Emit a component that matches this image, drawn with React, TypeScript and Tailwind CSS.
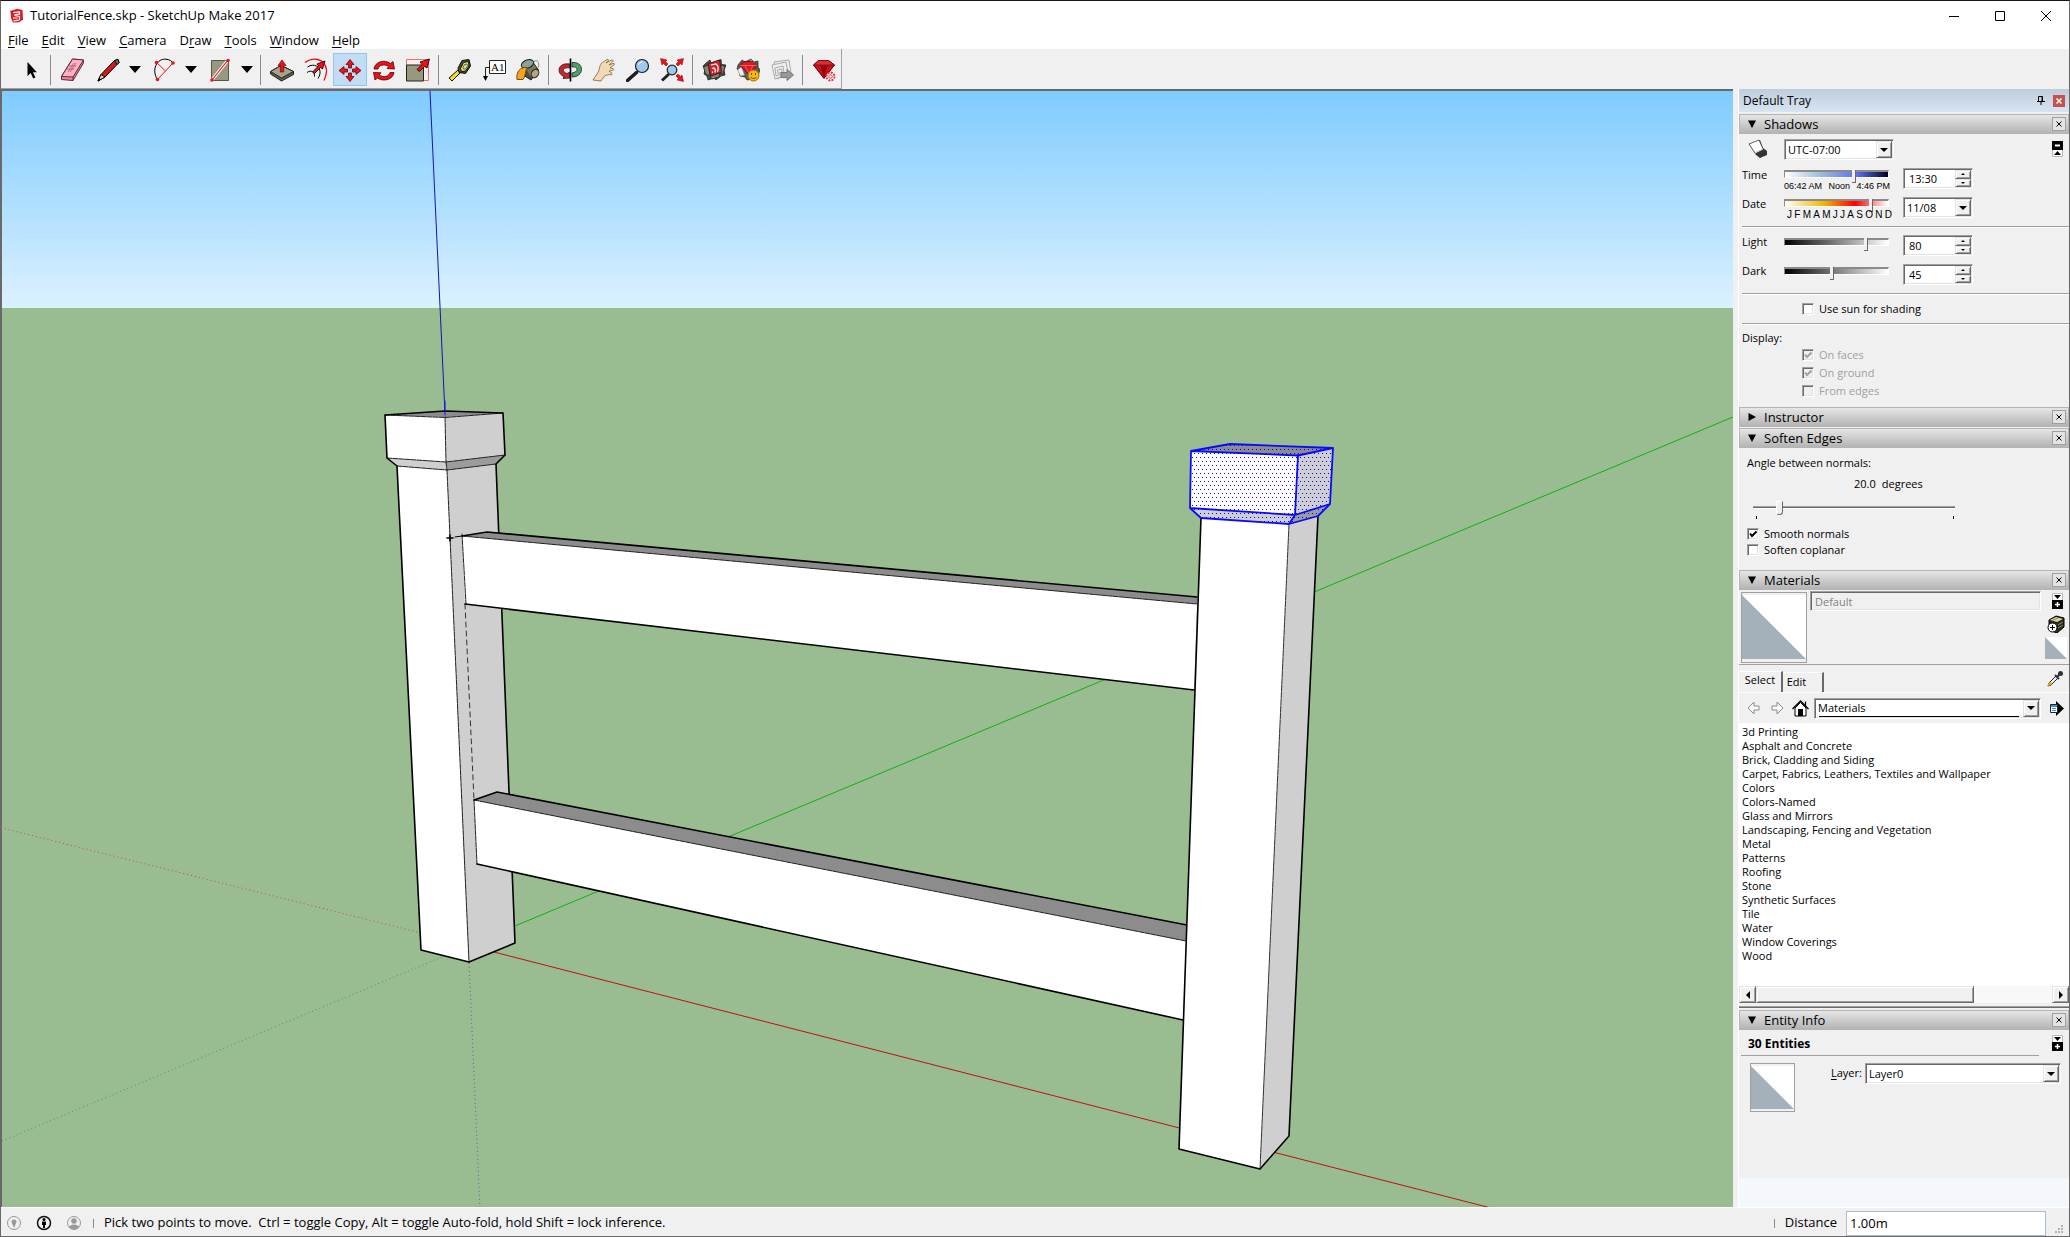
import { useState } from "react";
import type { ReactNode } from "react";
import clsx from "clsx";

const MENUS = [
  ["", "F", "ile"],
  ["", "E", "dit"],
  ["", "V", "iew"],
  ["", "C", "amera"],
  ["D", "r", "aw"],
  ["", "T", "ools"],
  ["", "W", "indow"],
  ["", "H", "elp"],
];

const MATERIALS = [
  "3d Printing",
  "Asphalt and Concrete",
  "Brick, Cladding and Siding",
  "Carpet, Fabrics, Leathers, Textiles and Wallpaper",
  "Colors",
  "Colors-Named",
  "Glass and Mirrors",
  "Landscaping, Fencing and Vegetation",
  "Metal",
  "Patterns",
  "Roofing",
  "Stone",
  "Synthetic Surfaces",
  "Tile",
  "Water",
  "Window Coverings",
  "Wood",
];

const SUNKEN =
  "border border-t-[#a0a0a0] border-l-[#a0a0a0] border-r-white border-b-white shadow-[inset_1px_1px_0_#696969,inset_-1px_-1px_0_#e3e3e3]";
const RAISED =
  "bg-[#f0f0f0] border border-t-[#e3e3e3] border-l-[#e3e3e3] border-r-[#696969] border-b-[#696969] shadow-[inset_1px_1px_0_#ffffff,inset_-1px_-1px_0_#a0a0a0]";

export default function App() {
  return (
    <div className="flex h-screen min-h-[900px] flex-col overflow-hidden border border-[#696969] border-t-[#1c1618] bg-[#f0f0f0] font-['Open_Sans',sans-serif] text-[13px] text-black">
      <TitleBar />
      <MenuBar />
      <Toolbar />
      <main className="flex min-h-0 flex-1">
        <div className="min-w-0 flex-1 border-t-2 border-l border-[#696969]">
          <Viewport />
        </div>
        <Tray />
      </main>
      <StatusBar />
    </div>
  );
}

// ── Window chrome ──────────────────────────────────

function TitleBar() {
  return (
    <header className="flex h-[30px] shrink-0 items-center bg-white pl-2">
      <svg viewBox="0 0 16 16" className="size-4 shrink-0">
        <path d="M1.500 3 8 .8l5.500 1.200.5 9-3.500 3.200L4 14.500 2 10z" fill="#e21b22" />
        <path d="M4 4.500 10.500 3.800 10.500 6.200 6 6.500 6 7.500 10.500 8.500 10.500 12 4.500 12.800M8.500 10H4" fill="none" stroke="#fff" strokeWidth="1.200" />
        <path d="m1.500 3 2.500 1.500M14 11l-3.500 1.500" stroke="#9b0d12" />
      </svg>
      <h1 className="ml-[5px] flex-1">TutorialFence.skp - SketchUp Make 2017</h1>
      <div className="flex">
        <WindowButton label="Minimize">
          <path d="M1 6.500h10" />
        </WindowButton>
        <WindowButton label="Maximize">
          <path d="M1.500 1.500h9v9h-9z" />
        </WindowButton>
        <WindowButton label="Close">
          <path d="m1 1 10 10M11 1 1 11" />
        </WindowButton>
      </div>
    </header>
  );
}

function WindowButton({ label, children }: { label: string; children: ReactNode }) {
  return (
    <button type="button" aria-label={label} className="flex h-[30px] w-[46px] items-center justify-center hover:bg-gray-200">
      <svg viewBox="0 0 12 12" className="size-3" fill="none" stroke="#000">
        {children}
      </svg>
    </button>
  );
}

function MenuBar() {
  return (
    <nav className="flex h-[18px] shrink-0 items-center gap-[13px] bg-white pt-px pl-[7px] leading-[17px]">
      {MENUS.map(([before, key, after]) => (
        <button type="button" key={key}>
          {before}
          <span className="underline underline-offset-2">{key}</span>
          {after}
        </button>
      ))}
    </nav>
  );
}

// ── Toolbar ────────────────────────────────────────

const RED = "#f01018";

function Toolbar() {
  const [tool, setTool] = useState("Move");
  const btn = (name: string, icon: ReactNode) => (
    <ToolButton name={name} active={tool === name} onClick={() => setTool(name)}>
      {icon}
    </ToolButton>
  );
  return (
    <div className="flex h-10 shrink-0">
      <div role="toolbar" className="flex items-center border-r border-b border-[#a0a0a0] pt-0.5">
        <div className="h-8 w-3 bg-[radial-gradient(#a0a0a0_1px,transparent_1px)] bg-[length:12px_4px]" />
        {btn("Select", <path d="M9.500 4v14l3.200-3 2.500 5.500 2.200-1-2.500-5.300h4z" fill="#000" />)}
        <Divider />
        {btn(
          "Eraser",
          <g stroke="#5b2838" strokeLinejoin="round">
            <path d="m12.500 1 11 1-.3 3.500L13 22.500 1.500 21.500v-3z" fill="#f3879f" />
            <path d="m12.500 1 11 1L13 19 1.500 18.500z" fill="#ffb0c2" />
            <path d="M13 19v3.500" />
            <path d="m8 14 6-9M10 14l6-9M7 11h7M9 8h7" stroke="#a04a62" strokeWidth=".7" />
          </g>,
        )}
        <ToolGroup>
          {btn(
            "Pencil",
            <g stroke="#000" strokeLinejoin="round">
              <path d="M2 23 5 16.500 18.500 2.500 22 1.500 23 4.500 9 19z" fill="#d3181f" />
              <path d="m2 23 3-6.500L9 19z" fill="#f0d9a8" />
              <path d="m2 23 1-2.500 1.500 1z" fill="#000" />
              <path d="m18.500 2.500 3.500-1 1 3-2 2z" fill="#777" />
            </g>,
          )}
        </ToolGroup>
        <ToolGroup>
          {btn(
            "Arc",
            <g fill="none">
              <path d="M5.500 21.500C-1 12 5 0 14 1.200 18 1.500 20 3.500 21 5" stroke="#000" />
              <path d="M5.500 21.500 21 5M5 5l8.500 8" stroke={RED} />
              <g fill={RED}>
                <circle cx="5.500" cy="21.500" r="1.800" />
                <circle cx="21" cy="5" r="1.800" />
                <circle cx="4.500" cy="4.500" r="1.800" />
              </g>
            </g>,
          )}
        </ToolGroup>
        <ToolGroup>
          {btn(
            "Rectangle",
            <g>
              <path d="M3.500 2.500h17v20h-17z" fill="#98987f" stroke="#55554a" />
              <path d="M4 22 20 2" stroke="#fff" strokeWidth="3" />
              <path d="M4 22 20 2" stroke={RED} strokeWidth="1.200" />
              <circle cx="4" cy="22" r="1.800" fill={RED} />
              <circle cx="20" cy="2.500" r="1.800" fill={RED} />
            </g>,
          )}
        </ToolGroup>
        <Divider />
        {btn(
          "Push/Pull",
          <g stroke="#222" strokeLinejoin="round">
            <path d="M.5 13.500 11 7.500l12.500 6v3L11.500 23 .5 16z" fill="#5e5e50" />
            <path d="M.5 13.500 11 7.500l12.500 6-12 6.500z" fill="#a5a58e" />
            <path d="m12 2 4 5.500h-2.300V14h-3.400V7.500H8z" fill={RED} stroke="#7a0508" strokeWidth=".7" />
          </g>,
        )}
        {btn(
          "Offset",
          <g fill="none">
            <path d="M1 4.500C8-1 21-.5 22.500 12c.4 4-1 7-2.500 10.500" stroke={RED} strokeWidth="1.300" />
            <path d="M3.500 9C10 4.500 17 9 16 15.500c-.3 2-1 3.500-2 5" stroke="#000" />
            <path d="M3 14.500c4-3 8-.5 7.500 4" stroke="#000" />
            <path d="m8.500 14 6-6-1.500-2 8-3-2.500 8-2-1.500-6 6z" fill={RED} stroke="#000" strokeWidth=".8" />
          </g>,
        )}
        {btn(
          "Move",
          <g fill={RED} stroke="#5c0b10" strokeWidth=".8">
            <path d="m12 1.500 4 5h-2.500v3.500h-3V6.500H8zM12 23.500l4-5h-2.500V15h-3v3.500H8zM1 12.500l5-4v2.500h3.500v3H6v2.500zM23 12.500l-5-4v2.500h-3.500v3H18v2.500z" />
          </g>,
        )}
        {btn(
          "Rotate",
          <g fill={RED} stroke="#4c0508" strokeWidth=".8">
            <path d="M2 11C2.500 4.500 12 .5 18.500 5.500L21 3.500 22.500 11 15 10.500l1.800-2C12 5.500 7 7 6 11z" />
            <path d="M22 14.500c-.5 6.500-10 10-16.500 5.500L3 22 1.500 14.500l7.500.3-1.800 2.200c4.800 3 9.800 1.500 10.800-2.500z" />
          </g>,
        )}
        {btn(
          "Scale",
          <g>
            <path d="M.5 1.500h22v21H.5z" fill="#fdeeee" stroke="#e87078" />
            <path d="M.5 7h17v16H.5z" fill="#98987f" stroke="#222" />
            <path d="m11 11.500 5-5-2-2.500 9.500-3L21 10l-2.500-1.500-5 5z" fill={RED} stroke="#000" strokeWidth=".8" />
          </g>,
        )}
        <Divider />
        {btn(
          "Tape Measure",
          <g stroke="#111" strokeLinejoin="round">
            <path d="m1 20 9-8 3 2-9 9z" fill="#f2dc24" />
            <path d="m10 10 4-7.500L21 1.500 22.500 8l-5 7.500-6.500-1z" fill="#4a4a3c" />
            <path d="m12.500 10.500 3-6 5-1 .5 4.500-3.500 5-4 .5z" fill="#f2e95a" />
            <path d="m15 9.500 1.500-3 2.500-.5.500 2-2 3h-2z" fill="#d8d8c8" strokeWidth=".6" />
          </g>,
        )}
        {btn(
          "Text",
          <g>
            <path d="M7.500 2.500h16v13h-16z" fill="#fff" stroke="#222" />
            <text x="9" y="12.500" className="font-['Liberation_Serif',serif] text-[11px]">A1</text>
            <path d="M7 9.500H3.500v9" fill="none" stroke="#222" />
            <path d="M1 18h5l-2.500 5z" fill="#000" />
          </g>,
        )}
        {btn(
          "Paint Bucket",
          <g stroke="#222" strokeLinejoin="round">
            <path d="m6 6 9-4.500 7.500 10.500-7.500 10-7-4.500z" fill="#4b4b3e" />
            <path d="m9 8 8-4 4 7.500-7 7z" fill="#77765e" stroke="none" />
            <ellipse cx="11.500" cy="6" rx="6.500" ry="4" fill="#8da19b" transform="rotate(-22 11.500 6)" />
            <ellipse cx="19" cy="15.500" rx="3.500" ry="4.500" fill="#b8a57c" transform="rotate(35 19 15.500)" />
            <path d="M18 3.500c3-2 5.500 0 4.500 6" fill="none" stroke="#888" />
            <path d="M1 21.500C0 14 4 8.500 11.500 9.500 9 12 9.500 19 7 21.500z" fill="#f6a51c" stroke="#7a4a08" />
          </g>,
        )}
        <Divider />
        {btn(
          "Orbit",
          <g stroke="#222" strokeWidth=".8">
            <path d="M12 6C5 5 1 8 1 12c0 3 2 5.500 5 6.500l-1 2 7-.5v-6L9 15.500c-3-1-4-2.500-3.500-4C6 10 9 9.500 12 10z" fill="#c9232c" />
            <path d="M14 4.500c6-.5 9.500 2.500 9.500 7 0 3-2 5.500-5.500 7l-4 .5v-4c3-.5 5-2 5-3.500 0-2-2-3-5-2.500z" fill="#4aa366" />
            <path d="M12.500.5v23" stroke="#000" strokeWidth="1.600" />
          </g>,
        )}
        {btn(
          "Pan",
          <path d="M1 22c2-4 5-6 6-10C8 7 9 5 10.500 4.500L15 1.500c2-.5 2 1 .5 2L14 5l5.500-3c2-.5 2 1 .8 2L17 7l4-1.500c2-.5 2 1 .5 1.800L18 10l3 .5c1.500.5.5 2-.5 2l-3.500.5 3 2.500c.5 1.500-1 1.500-2 1l-5 1-4 5.500z" fill="#f3d9b1" stroke="#7d6240" strokeWidth=".8" />,
        )}
        {btn(
          "Zoom",
          <g stroke="#1c1c1c">
            <path d="m1.500 22.500 9-8" strokeWidth="3.500" strokeLinecap="round" />
            <circle cx="16" cy="8" r="6.500" fill="#9fc8ee" strokeWidth="1.200" />
            <path d="M12.500 7c.5-2 2-3 4-3" fill="none" stroke="#fff" />
          </g>,
        )}
        {btn(
          "Zoom Extents",
          <g stroke="#222" strokeWidth=".7">
            <path d="m2 22.500 7-6.500" strokeWidth="3" />
            <circle cx="12" cy="12" r="4.800" fill="#9fc8ee" strokeWidth="1.200" />
            <g fill={RED} stroke="#7a0508" strokeWidth=".5">
              <path d="M.5.5 7 2 5.500 3.500 8 6 6 8 3.500 5.500 2 7z" />
              <path d="M23.500.5 17 2l1.500 1.500L16 6l2 2 2.500-2.500L22 7z" />
              <path d="M23.500 23.500 17 22l1.500-1.500L16 18l2-2 2.500 2.500L22 17z" />
            </g>
          </g>,
        )}
        <Divider />
        {btn(
          "3D Warehouse",
          <g stroke="#222" strokeWidth=".8">
            <path d="m4 5 4-3 1 3 10-3.500.5 5L24 7l-2 5 1 5-4 1-5 4-2-2-6 2-1-4-3-2 1-5-2-3z" fill="#4c4d42" />
            <path d="m1.500 9 5-2 1.500 11-4.500-2zM19 7l4 1-2 8-2-1zM8 18l10-3-1 4-7 2z" fill="#85866f" />
            <path d="m6 6 11.500-4 2 12L9 18z" fill="#d6202a" />
            <path d="m9 7 5-1c3 2 2.500 5 1.500 8M10 10.500l2-.5c1.500 1 1.500 3 1 4.500M10.500 13.500v1.500" fill="none" stroke="#fff" strokeWidth="1.200" />
          </g>,
        )}
        {btn(
          "Extension Warehouse",
          <g>
            <path d="m2 7 4-5 3 2 6-3 3 3 4-1v6l2 3-3 8-10 2-2-3-5-1-1-5-2-2z" fill="#5a5a50" stroke="#333" strokeWidth=".8" />
            <path d="m1.500 12 4-3 3 8-4 1zM14 1.500l5 3-3 2z" fill="#eee" stroke="#999" strokeWidth=".6" />
            <path d="m4 7.500 4-4h9l4 4-8 9z" fill="#d91923" stroke="#7a0508" strokeWidth=".8" />
            <path d="M4 7.500h17M9 7.500l4 8 4-8" fill="none" stroke="#ff7b80" strokeWidth=".7" />
            <circle cx="17.500" cy="17.500" r="5.500" fill="#f7b51c" stroke="#a56e00" />
            <path d="M15.500 15v2M19.500 15v2M14.500 19c1.500 2 4.500 2 6 0" fill="none" stroke="#7a4a00" />
          </g>,
        )}
        {btn(
          "Send to LayOut",
          <g fill="#eee" stroke="#aaa">
            <path d="m4 4 15-2 2 13-14 6z" />
            <path d="m2 7 14-3 2 12-13 5z" />
            <path d="m5 10 8-2 1 7-8 3zM7.500 12l4-1 .5 3-4 1.500z" fill="none" />
            <path d="M11 14.500h6v-3l6.500 5.500-6.500 5.500v-3h-6z" fill="#999" stroke="#777" />
          </g>,
        )}
        <Divider />
        {btn(
          "Extension Manager",
          <g strokeLinejoin="round">
            <path d="m1.500 7 5-4.500h10L22.500 7 12 20.500z" fill="#c8101a" stroke="#5c0408" />
            <path d="M1.500 7h21L16.500 2.500h-10z" fill="#e02a34" stroke="#7a0508" strokeWidth=".7" />
            <path d="M8 7h8l-4 13z" fill="#960810" />
            <circle cx="18.500" cy="18.500" r="4" fill="#fff" stroke="#e03038" strokeWidth="1.800" strokeDasharray="2 1.100" />
            <circle cx="18.500" cy="18.500" r="1.800" fill="none" stroke="#e03038" />
          </g>,
        )}
      </div>
    </div>
  );
}

function ToolButton({
  name,
  active,
  onClick,
  children,
}: {
  name: string;
  active: boolean;
  onClick: () => void;
  children: ReactNode;
}) {
  return (
    <button
      type="button"
      title={name}
      aria-pressed={active}
      onClick={onClick}
      className={clsx(
        "flex h-[33px] w-[34px] items-center justify-center border",
        active ? "border-[#8fc8f6] bg-[#c2dcf3]" : "border-transparent",
      )}
    >
      <svg viewBox="0 0 24 24" className="size-6 shrink-0">
        {children}
      </svg>
    </button>
  );
}

function ToolGroup({ children }: { children: ReactNode }) {
  return (
    <div className="flex w-14 items-center pl-0.5">
      {children}
      <button type="button" aria-label="More tools" className="flex h-7 flex-1 items-center justify-center">
        <svg viewBox="0 0 12 7" className="h-[7px] w-3 shrink-0">
          <path d="M0 0h12L6 7z" />
        </svg>
      </button>
    </div>
  );
}

function Divider() {
  return <div className="mr-1 ml-[3px] h-[30px] w-px bg-[#8c8c8c]" />;
}

// ── 3D viewport ────────────────────────────────────

function Viewport() {
  return (
    <svg
      viewBox="2 90 1731 1116"
      preserveAspectRatio="xMidYMid slice"
      className="block h-full w-full"
      role="img"
      aria-label="Fence model"
      strokeLinejoin="round"
      strokeLinecap="round"
    >
      <defs>
        <linearGradient id="sky" x1="0" y1="0" x2="0" y2="1">
          <stop offset="0" stopColor="#7fcbff" />
          <stop offset="1" stopColor="#dcf1ff" />
        </linearGradient>
        <pattern id="selected" width="4" height="8" patternUnits="userSpaceOnUse">
          <path d="M0 0h1v1H0zM2 4h1v1H2z" fill="#0000ff" shapeRendering="crispEdges" />
        </pattern>
      </defs>
      <rect x="0" y="90" width="1740" height="217" fill="url(#sky)" />
      <rect x="0" y="307" width="1740" height="910" fill="#9abc91" />

      {/* axes */}
      <path d="M430 90 445 413" stroke="#1414b4" />
      <path d="m515 925 1218-509" stroke="#12b012" />
      <path d="m490 950 1001 257" stroke="#c01010" />
      <g strokeDasharray="1 3" strokeLinecap="butt">
        <path d="m469 962 11 246" stroke="#4a6ab0" />
        <path d="M442 956 2 1140" stroke="#2fa83a" />
        <path d="M421 932 2 827" stroke="#b8553e" />
      </g>

      {/* left post */}
      <path d="m397 465 50 4 22 492-48-12z" fill="#fff" />
      <path d="m447 469 49-6 19 479-46 19z" fill="#cfcfcf" />
      <path d="m385 414 60 2 1 45-59-4z" fill="#fff" />
      <path d="m445 416 58-4 2 42-59 7z" fill="#cfcfcf" />
      <path d="m385 414 60-4 58 2-58 4z" fill="#8c8c8c" />
      <path d="m387 457 59 4 1 8-50-4z" fill="#cfcfcf" />
      <path d="m446 461 59-7-9 9-49 6z" fill="#9c9c9c" />
      <path d="m385 414 60 2.500 58-4.500M445 416l1 45M387 457l59 4 59-7M446 461l1 8M397 465l50 4 49-6M447 469l22 492" fill="none" stroke="#222" strokeDasharray="5 1" />
      <path d="m397 465-10-8-2-43 60-4 58 2 2 42-9 9 19 479-46 19-48-12z" fill="none" stroke="#000" strokeWidth="1.600" />
      <path d="M445 400v14" stroke="#1414e4" />
      <path d="m465 603 9 196" stroke="#333" strokeDasharray="5 4" />
      <path d="M450 534v6M447 537h6" stroke="#000" strokeWidth="1.600" />
      <path d="m455 536 7-1" stroke="#000" />

      {/* rails */}
      <path d="m462 535 735 68-3 86-729-86z" fill="#fff" />
      <path d="m462 535 25-4 710 65v7z" fill="#8c8c8c" />
      <path d="m462 535 735 68M462 533l4 70" fill="none" stroke="#222" strokeDasharray="5 1" />
      <path d="m462 535 25-4 710 65M465 603l729 86" fill="none" stroke="#000" strokeWidth="1.600" />
      <path d="m474 799 712 141-3 79-706-156z" fill="#fff" />
      <path d="m474 799 23-8 690 133-1 16z" fill="#8c8c8c" />
      <path d="m474 799 712 141M474 799l3 64" fill="none" stroke="#222" strokeDasharray="5 1" />
      <path d="m474 799 23-8 690 133M477 863l706 156" fill="none" stroke="#000" strokeWidth="1.600" />

      {/* right post */}
      <path d="m1201 517 88 6-29 645-81-20z" fill="#fff" />
      <path d="m1289 523 29-8-29 620-29 33z" fill="#cfcfcf" />
      <path d="m1289 523-29 645" stroke="#333" strokeDasharray="6 1" />
      <path d="m1201 517-22 631 81 20 29-33 29-620" fill="none" stroke="#000" strokeWidth="1.600" />
      <path d="m1191 450 107 4-3 60-105-7z" fill="#fff" />
      <path d="m1298 454 35-7-3 56-35 11z" fill="#cfcfcf" />
      <path d="m1191 450 39-7 103 4-35 7z" fill="#8c8c8c" />
      <path d="m1190 507 105 7-6 9-88-6z" fill="#cfcfcf" />
      <path d="m1295 514 35-11-12 12-29 8z" fill="#9c9c9c" />
      <path d="m1191 450 39-7 103 4-3 56-12 12-29 8-88-6-11-10z" fill="url(#selected)" />
      <path d="m1191 450 39-7 103 4-3 56-12 12-29 8-88-6-11-10zl107 4.500 35-7.500M1298 454l-3 60-105-7M1295 514l35-11M1295 514l-6 9" fill="none" stroke="#0a0aff" strokeWidth="1.800" />
    </svg>
  );
}

// ── Tray ───────────────────────────────────────────

function Tray() {
  return (
    <aside className="ml-[5px] flex w-[331px] shrink-0 flex-col border-l border-white text-[11px] leading-[14px]">
      <div className="flex h-[23px] shrink-0 items-center bg-linear-to-b from-[#bfcddb] to-[#d7e4f2] pr-1 pl-1 text-[12px]">
        <h2 className="flex-1">Default Tray</h2>
        <button type="button" aria-label="Pin tray" className="mr-2">
          <svg viewBox="0 0 8 9" className="h-[9px] w-2" fill="none" stroke="#000">
            <path d="M1.500 5V.5h4V5M0 5.500h8M4 6v3M5 .5V5" />
          </svg>
        </button>
        <button type="button" aria-label="Close tray" className="flex size-3 items-center justify-center bg-[#c75050]">
          <svg viewBox="0 0 6 6" className="size-[6px]" stroke="#fff" strokeWidth="1.500">
            <path d="m.5.5 5 5M5.500.5l-5 5" />
          </svg>
        </button>
      </div>
      <div className="mt-0.5">
        <SectionHeader title="Shadows" open />
      </div>
      <ShadowsPanel />
      <SectionHeader title="Instructor" />
      <SectionHeader title="Soften Edges" open />
      <SoftenPanel />
      <SectionHeader title="Materials" open />
      <MaterialsPanel />
      <SectionHeader title="Entity Info" open />
      <EntityPanel />
      <div className="flex-1 bg-[#f4f7fc]" />
    </aside>
  );
}

function SectionHeader({ title, open = false }: { title: string; open?: boolean }) {
  return (
    <div className="mb-px flex h-5 shrink-0 items-center border border-[#b4b4b4] bg-linear-to-b from-[#e6e6e6] to-[#b4b4b4] pr-[2px] pl-2 text-[13px]">
      <button type="button" aria-expanded={open} className="flex flex-1 items-center gap-2">
        <svg viewBox="0 0 8 8" className="size-2">
          <path d={open ? "M0 .5h8L4 8z" : "M.5 0v8L8 4z"} />
        </svg>
        <h3 className="leading-[18px]">{title}</h3>
      </button>
      <button type="button" aria-label={`Close ${title}`} className="flex size-[14px] items-center justify-center border border-[#a0a0a0] bg-[#e3e3e3]">
        <svg viewBox="0 0 6 6" className="size-[6px]" stroke="#000">
          <path d="m.5.5 5 5M5.500.5l-5 5" />
        </svg>
      </button>
    </div>
  );
}

function ShadowsPanel() {
  return (
    <section className="h-[272px] shrink-0 pl-[3px]">
      <div className="flex h-[33px] items-start pt-1">
        <button type="button" aria-label="Show shadows" className="ml-[6px] w-9">
          <svg viewBox="0 0 20 20" className="size-5" strokeLinejoin="round">
            <path d="m1 5 11-4 3 8 4 3v4l-7 3-4-3z" fill="#333" />
            <path d="m1 5 10-4 4 9-8 4z" fill="#fff" stroke="#444" strokeWidth=".8" />
            <path d="m7 14 8-4" stroke="#eee" />
          </svg>
        </button>
        <Combo label="Time zone" value="UTC-07:00" width="w-[110px]" />
        <div className="flex-1" />
        <DetailToggle expanded />
      </div>
      <ShadowRow label="Time" id="time">
        <div className="w-[119px]">
          <TraySlider label="Time of day" value={68} track="[&::-webkit-slider-runnable-track]:bg-[linear-gradient(90deg,#ffffff,#9cbcd8_35%,#5c70f0_70%,#000020)]" />
          <div className="flex w-[106px] justify-between font-['Liberation_Sans',sans-serif] text-[9px] leading-3 font-medium whitespace-nowrap">
            <span>06:42 AM</span>
            <span>Noon</span>
            <span>4:46 PM</span>
          </div>
        </div>
        <Spinner id="time" value="13:30" />
      </ShadowRow>
      <ShadowRow label="Date" id="date">
        <div className="w-[119px]">
          <TraySlider label="Day of year" value={85} track="[&::-webkit-slider-runnable-track]:bg-[linear-gradient(90deg,#fffef0,#f4b400_38%,#ff0000_68%,#ffffff)]" />
          <div className="flex w-[108px] justify-between pl-[3px] font-['Liberation_Sans',sans-serif] text-[10px] leading-3">
            {"JFMAMJJASOND".split("").map((m, i) => (
              <span key={i}>{m}</span>
            ))}
          </div>
        </div>
        <Combo id="date" value="11/08" width="w-[70px]" />
      </ShadowRow>
      <Rule />
      <div className="h-[7px]" />
      <ShadowRow label="Light" id="light">
        <div className="w-[119px] pt-px">
          <TraySlider label="Light level" value={80} track="[&::-webkit-slider-runnable-track]:bg-[linear-gradient(90deg,#000000,#ffffff)]" />
        </div>
        <Spinner id="light" value="80" />
      </ShadowRow>
      <ShadowRow label="Dark" id="dark">
        <div className="w-[119px] pt-px">
          <TraySlider label="Dark level" value={45} track="[&::-webkit-slider-runnable-track]:bg-[linear-gradient(90deg,#000000,#ffffff)]" />
        </div>
        <Spinner id="dark" value="45" />
      </ShadowRow>
      <Rule />
      <div className="flex h-7 items-center pl-[60px]">
        <Check label="Use sun for shading" />
      </div>
      <Rule />
      <p className="mt-[6px] h-[17px]">Display:</p>
      <div className="flex flex-col gap-1 pl-[60px]">
        <Check label="On faces" checked disabled />
        <Check label="On ground" checked disabled />
        <Check label="From edges" disabled />
      </div>
    </section>
  );
}

function ShadowRow({ label, id, children }: { label: string; id: string; children: ReactNode }) {
  return (
    <div className="flex h-[29px] items-start">
      <label htmlFor={id} className="w-[42px]">
        {label}
      </label>
      {children}
    </div>
  );
}

function TraySlider({ label, value, track }: { label: string; value: number; track: string }) {
  return (
    <input
      type="range"
      aria-label={label}
      defaultValue={value}
      className={clsx(
        "block h-3 w-[105px] appearance-none bg-transparent",
        "[&::-webkit-slider-runnable-track]:h-2 [&::-webkit-slider-runnable-track]:border [&::-webkit-slider-runnable-track]:border-t-2 [&::-webkit-slider-runnable-track]:border-[#8a8a8a] [&::-webkit-slider-runnable-track]:border-r-white [&::-webkit-slider-runnable-track]:border-b-white",
        "[&::-webkit-slider-thumb]:-mt-0.5 [&::-webkit-slider-thumb]:h-[13px] [&::-webkit-slider-thumb]:w-1 [&::-webkit-slider-thumb]:appearance-none [&::-webkit-slider-thumb]:border-r [&::-webkit-slider-thumb]:border-b [&::-webkit-slider-thumb]:border-[#696969] [&::-webkit-slider-thumb]:bg-[#f0f0f0]",
        track,
      )}
    />
  );
}

function Combo({ label, id, value, width }: { label?: string; id?: string; value: string; width: string }) {
  return (
    <div className={clsx("relative h-[21px] bg-white", SUNKEN, width)}>
      <select id={id} aria-label={label} className="block h-full w-full appearance-none bg-transparent pl-[3px] outline-none">
        <option>{value}</option>
      </select>
      <span className={clsx("pointer-events-none absolute top-px right-px bottom-px flex w-4 items-center justify-center", RAISED)}>
        <svg viewBox="0 0 8 4" className="h-1 w-2">
          <path d="M0 0h8L4 4z" />
        </svg>
      </span>
    </div>
  );
}

function Spinner({ id, value }: { id: string; value: string }) {
  return (
    <div className={clsx("flex h-[21px] w-[70px] bg-white p-px", SUNKEN)}>
      <input id={id} defaultValue={value} className="w-0 flex-1 bg-transparent pl-[4px] outline-none" />
      <div className="flex w-4 flex-col">
        <button type="button" aria-label="Increase" className={clsx("flex flex-1 items-center justify-center", RAISED)}>
          <svg viewBox="0 0 4 2" className="h-0.5 w-1">
            <path d="M0 2h4L2 0z" />
          </svg>
        </button>
        <button type="button" aria-label="Decrease" className={clsx("flex flex-1 items-center justify-center", RAISED)}>
          <svg viewBox="0 0 4 2" className="h-0.5 w-1">
            <path d="M0 0h4L2 2z" />
          </svg>
        </button>
      </div>
    </div>
  );
}

function Check({ label, checked = false, disabled = false }: { label: string; checked?: boolean; disabled?: boolean }) {
  return (
    <label className={clsx("flex h-[14px] items-center gap-[5px]", disabled && "text-[#a0a0a0]")}>
      <span className="relative flex size-3">
        <input
          type="checkbox"
          defaultChecked={checked}
          disabled={disabled}
          className={clsx("peer size-3 appearance-none", disabled ? "bg-[#f0f0f0]" : "bg-white", SUNKEN)}
        />
        <svg viewBox="0 0 12 12" className="pointer-events-none absolute inset-0 hidden size-3 peer-checked:block" fill="none" stroke="currentColor" strokeWidth="2">
          <path d="m3 5.500 2 2.500 4.500-4.500" />
        </svg>
      </span>
      {label}
    </label>
  );
}

function Rule() {
  return <div className="h-0.5 border-t border-b border-t-[#a0a0a0] border-b-white" />;
}

function DetailToggle({ expanded = false }: { expanded?: boolean }) {
  return (
    <button type="button" aria-label="Toggle details" className="mt-0.5 mr-[6px] h-4 w-[11px] shrink-0">
      <svg viewBox="0 0 11 16" className="h-4 w-[11px]">
        <path d="M.5.5h10v15H.5z" fill="#fff" stroke="#bbb" />
        {expanded ? (
          <>
            <path d="M0 0h11v9H0zM2 14h7l-3.500-4z" />
            <path d="M3 4.500h5" stroke="#fff" strokeWidth="2" />
          </>
        ) : (
          <>
            <path d="M0 7h11v9H0zM2 2h7L5.500 6z" />
            <path d="M3 11.500h5M5.500 9v5" stroke="#fff" strokeWidth="1.500" />
          </>
        )}
      </svg>
    </button>
  );
}

function SoftenPanel() {
  return (
    <section className="h-[121px] shrink-0 pt-[7px] pl-2">
      <label htmlFor="angle" className="block h-[21px]">
        Angle between normals:
      </label>
      <p className="flex gap-[6px] pl-[107px]">
        <span>20.0</span>
        <span>degrees</span>
      </p>
      <input
        id="angle"
        type="range"
        max={180}
        defaultValue={21}
        className="mt-2 ml-[6px] block h-4 w-[202px] appearance-none bg-transparent [&::-webkit-slider-runnable-track]:h-[3px] [&::-webkit-slider-runnable-track]:border-t [&::-webkit-slider-runnable-track]:border-b [&::-webkit-slider-runnable-track]:border-t-[#a0a0a0] [&::-webkit-slider-runnable-track]:border-b-white [&::-webkit-slider-runnable-track]:bg-[#696969] [&::-webkit-slider-thumb]:-mt-[6px] [&::-webkit-slider-thumb]:h-[14px] [&::-webkit-slider-thumb]:w-[7px] [&::-webkit-slider-thumb]:appearance-none [&::-webkit-slider-thumb]:rounded-b-sm [&::-webkit-slider-thumb]:border [&::-webkit-slider-thumb]:border-white [&::-webkit-slider-thumb]:border-r-[#696969] [&::-webkit-slider-thumb]:border-b-[#696969] [&::-webkit-slider-thumb]:bg-[#f0f0f0]"
      />
      <div className="mt-px ml-[9px] flex h-[3px] w-[198px] justify-between">
        <span className="w-px bg-black" />
        <span className="w-px bg-black" />
      </div>
      <div className="mt-2 flex flex-col gap-0.5">
        <Check label="Smooth normals" checked />
        <Check label="Soften coplanar" />
      </div>
    </section>
  );
}

function Swatch({ size }: { size: string }) {
  return (
    <svg viewBox="0 0 64 64" preserveAspectRatio="none" className={size}>
      <path d="M0 0h64v64H0z" fill="#fff" />
      <path d="m0 0 64 64H0z" fill="#a4b1ba" />
    </svg>
  );
}

function MaterialsPanel() {
  return (
    <section className="shrink-0">
      <div className="flex h-[74px] border-b border-[#a0a0a0] pl-0.5">
        <div className="mt-px h-[71px] w-[66px] border border-[#a0a0a0] pt-0.5">
          <Swatch size="size-16" />
        </div>
        <input
          aria-label="Material name"
          disabled
          defaultValue="Default"
          className={clsx("ml-[3px] h-5 min-w-0 flex-1 pl-1 text-[#808080]", SUNKEN)}
        />
        <div className="flex w-[28px] flex-col items-end">
          <DetailToggle />
          <button type="button" aria-label="Create material" className="mt-[6px] mr-1">
            <svg viewBox="0 0 18 18" className="size-[18px]" strokeLinejoin="round">
              <path d="m2 5 7-4 8 2v9l-7 6-8-3z" fill="#2b2b20" stroke="#000" />
              <path d="m3 5 6-3 7 2-6 3z" fill="#d5d3a0" />
              <path d="m5 5.500 6-2.500M11 10l5-3M11 13l5-3" stroke="#8c8b60" />
              <circle cx="5.500" cy="12.500" r="4.500" fill="#fff" stroke="#000" />
              <path d="M3 12.500h5M5.500 10v5" stroke="#000" />
            </svg>
          </button>
          <div className="mt-1 mr-0.5">
            <Swatch size="size-[22px]" />
          </div>
        </div>
      </div>
      <div className="flex h-[27px] items-end">
        <div role="tablist" className="flex items-end">
          <button type="button" role="tab" aria-selected className="h-[21px] w-[44px] border-t border-r-2 border-t-white border-r-[#696969] pb-1">
            Select
          </button>
          <button type="button" role="tab" aria-selected={false} className="h-5 w-[41px] border-t border-r-2 border-t-white border-r-[#696969] pr-3 pb-px">
            Edit
          </button>
        </div>
        <div className="flex-1" />
        <button type="button" aria-label="Sample paint" className="mr-[5px] mb-1">
          <svg viewBox="0 0 18 18" className="size-[18px]">
            <path d="m2 16 1-3 7-7 2 2-7 7z" fill="#eee" stroke="#222" />
            <path d="m1.500 16.500 1-3.500 2-1 2 2z" fill="#e8a820" />
            <path d="m9 5 4 4M11 7l4-4" stroke="#333" strokeWidth="2" />
            <circle cx="14.500" cy="3.500" r="2.500" fill="#333" />
          </svg>
        </button>
      </div>
      <div className="flex h-[31px] items-center border-t border-white pl-2">
        <button type="button" aria-label="Back">
          <svg viewBox="0 0 14 14" className="size-[14px]" fill="#f8f8f8" stroke="#8c8c8c">
            <path d="m1 7 6-6v4h5v4H7v4z" />
          </svg>
        </button>
        <button type="button" aria-label="Forward" className="ml-[9px]">
          <svg viewBox="0 0 14 14" className="size-[14px]" fill="#f8f8f8" stroke="#8c8c8c">
            <path d="M13 7 7 1v4H2v4h5v4z" />
          </svg>
        </button>
        <button type="button" aria-label="In model" className="ml-2">
          <svg viewBox="0 0 17 17" className="size-[17px]" strokeLinejoin="miter">
            <path d="M3 8v8h11V8L8.500 2.500z" fill="#fff" stroke="#000" />
            <path d="m.5 9 8-8 8 8M13.500 6V1.500" fill="none" stroke="#000" strokeWidth="1.300" />
            <path d="M6 9h5v7H6z" />
          </svg>
        </button>
        <div className="relative ml-[5px] min-w-0 flex-1">
          <Combo label="Material library" value="Materials" width="w-full" />
          <span className="absolute right-[22px] bottom-[2px] left-[5px] h-px bg-black" />
        </div>
        <button type="button" aria-label="Details" className="mr-[5px] ml-2">
          <svg viewBox="0 0 15 15" className="size-[15px]">
            <path d="M7 0v3h1v9H7v3l8-7.500z" />
            <path d="M1.500 3.500h7v8h-7z" fill="#fff" stroke="#222" />
            <path d="M2 4h6v2H2z" fill="#3a8ae0" />
            <path d="M3 7.500h4M3 9.500h4" stroke="#3a8ae0" />
          </svg>
        </button>
      </div>
      <ul className="h-[263px] bg-white pt-0.5 pl-[3px]">
        {MATERIALS.map((m) => (
          <li key={m} className="h-[14px] whitespace-nowrap">
            {m}
          </li>
        ))}
      </ul>
      <div className="flex h-[17px] bg-[#f8f8f8]">
        <button type="button" aria-label="Scroll left" className={clsx("flex w-[17px] items-center justify-center", RAISED)}>
          <svg viewBox="0 0 4 8" className="h-2 w-1">
            <path d="M4 0v8L0 4z" />
          </svg>
        </button>
        <div className={clsx("w-[66%]", RAISED)} />
        <div className="flex-1" />
        <button type="button" aria-label="Scroll right" className={clsx("flex w-[17px] items-center justify-center", RAISED)}>
          <svg viewBox="0 0 4 8" className="h-2 w-1">
            <path d="M0 0v8l4-4z" />
          </svg>
        </button>
      </div>
      <div className="mt-[3px] mb-0.5 h-0.5 border-b border-[#696969] bg-[#a0a0a0]" />
    </section>
  );
}

function EntityPanel() {
  return (
    <section className="h-[147px] shrink-0">
      <div className="flex h-[25px] pt-0.5">
        <div className="ml-0.5 flex-1 border-b border-[#a0a0a0] pt-1 pl-[7px] text-[12px] font-bold">30 Entities</div>
        <div className="flex w-[30px] justify-end">
          <DetailToggle />
        </div>
      </div>
      <div className="mt-[7px] flex items-start pr-2 pl-[11px]">
        <div className="h-[49px] w-[45px] border border-[#a0a0a0] pt-0.5">
          <Swatch size="size-[43px]" />
        </div>
        <label htmlFor="layer" className="mr-[3px] ml-9 pt-[3px]">
          <span className="underline underline-offset-2">L</span>ayer:
        </label>
        <div className="min-w-0 flex-1">
          <Combo id="layer" value="Layer0" width="w-full" />
        </div>
      </div>
    </section>
  );
}

// ── Status bar ─────────────────────────────────────

function StatusBar() {
  return (
    <footer className="flex h-[29px] shrink-0 items-center border-t border-white pt-0.5 pl-[5px]">
      <div className="flex gap-[14px]">
        <button type="button" aria-label="Geo-location">
          <svg viewBox="0 0 16 16" className="size-4" fill="none" stroke="#999">
            <circle cx="8" cy="8" r="6.500" />
            <path d="M8 13 5.500 7a2.500 2.500 0 1 1 5 0z" fill="#999" stroke="none" />
          </svg>
        </button>
        <button type="button" aria-label="Credits">
          <svg viewBox="0 0 16 16" className="size-4">
            <circle cx="8" cy="8" r="6.500" fill="none" stroke="#111" strokeWidth="1.500" />
            <circle cx="8" cy="4.500" r="1.500" />
            <path d="M6 6.500h4V10H9v3H7v-3H6z" />
          </svg>
        </button>
        <button type="button" aria-label="Sign in">
          <svg viewBox="0 0 16 16" className="size-4" fill="#999">
            <circle cx="8" cy="8" r="6.500" fill="none" stroke="#999" />
            <circle cx="8" cy="6" r="2.800" />
            <path d="M3 12c1-3.500 9-3.500 10 0-2.500 3-7.500 3-10 0z" />
          </svg>
        </button>
      </div>
      <span className="mr-[10px] ml-[11px] h-[9px] w-px bg-[#8c8c8c]" />
      <p className="flex-1 whitespace-pre">
        {"Pick two points to move.  Ctrl = toggle Copy, Alt = toggle Auto-fold, hold Shift = lock inference."}
      </p>
      <span className="mr-[10px] h-[9px] w-px bg-[#8c8c8c]" />
      <label htmlFor="distance">Distance</label>
      <input id="distance" defaultValue="1.00m" className="ml-[9px] h-[25px] w-[200px] border border-[#abbdd4] bg-white pl-[3px] outline-none" />
      <svg viewBox="0 0 12 12" className="ml-[7px] size-3 self-end" fill="#b4b4b4">
        <path d="M8 1h2v2H8zM8 4h2v2H8zM5 4h2v2H5zM8 7h2v2H8zM5 7h2v2H5zM2 7h2v2H2z" />
      </svg>
      <span className="w-1" />
    </footer>
  );
}
